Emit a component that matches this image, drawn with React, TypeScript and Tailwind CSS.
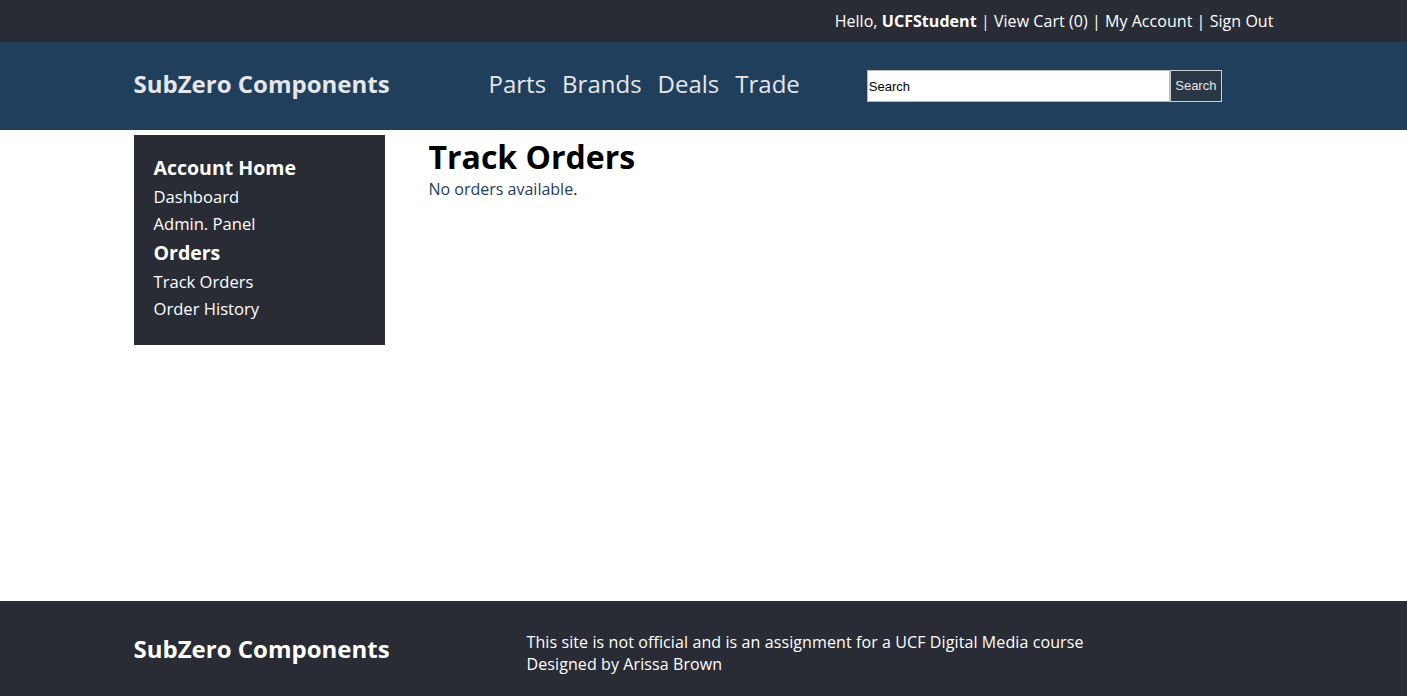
const font = { fontFamily: '"Open Sans", "Liberation Sans", sans-serif' };

function TopBar() {
  return (
    <div className="h-[42px] bg-[#292c34] text-white">
      <div className="mx-auto flex h-full w-[1140px] items-center justify-end text-[16px] tracking-[0.05px]">
        <span>
          Hello, <b>UCFStudent</b> <span className="text-[#e9e9f4]">|</span> View Cart (0){' '}
          <span>|</span> My Account <span>|</span> Sign Out
        </span>
      </div>
    </div>
  );
}

function NavBar() {
  return (
    <div className="h-[88px] bg-[#203f5d]">
      <div className="mx-auto flex h-full w-[1140px] items-center pb-[4px]">
        <div className="w-[355px] text-[24px] font-bold text-[#e6e6e6]">SubZero Components</div>
        <nav className="flex gap-[16px] text-[24px] text-[#e6e6e6]">
          <a>Parts</a>
          <a>Brands</a>
          <a>Deals</a>
          <a>Trade</a>
        </nav>
        <form className="ml-[67px] mt-[4px] flex h-[32px]" onSubmit={(e) => e.preventDefault()}>
          <input
            className="h-full w-[303px] border border-[#b8b8b8] bg-white px-[1px] text-[13px] text-black outline-none"
            style={{ fontFamily: '"Liberation Sans", Arial, sans-serif' }}
            defaultValue="Search"
          />
          <button
            className="h-full w-[52px] border border-[#d0d0d0] bg-[#2a3744] text-[13px] text-[#e6e6e6]"
            style={{ fontFamily: '"Liberation Sans", Arial, sans-serif' }}
          >
            Search
          </button>
        </form>
      </div>
    </div>
  );
}

function Sidebar() {
  return (
    <aside className="w-[251px] shrink-0 bg-[#292c34] px-[20px] pt-[18px] pb-[23px] text-white">
      <h3 className="text-[19.5px] font-bold leading-[30px]">Account Home</h3>
      <ul className="text-[16.6px] leading-[27px]">
        <li>Dashboard</li>
        <li>Admin. Panel</li>
      </ul>
      <h3 className="text-[19.5px] font-bold leading-[31px]">Orders</h3>
      <ul className="text-[16.6px] leading-[27px]">
        <li>Track Orders</li>
        <li>Order History</li>
      </ul>
    </aside>
  );
}

function Footer() {
  return (
    <footer className="h-[95px] bg-[#292c34] text-white">
      <div className="mx-auto flex h-full w-[1140px] items-center">
        <div className="w-[393px] text-[24px] font-bold">SubZero Components</div>
        <div className="pt-[8px] text-[16px] leading-[22px] tracking-[0.1px]">
          <p>This site is not official and is an assignment for a UCF Digital Media course</p>
          <p>Designed by Arissa Brown</p>
        </div>
      </div>
    </footer>
  );
}

export default function App() {
  return (
    <div className="flex min-h-[696px] flex-col bg-white" style={font}>
      <TopBar />
      <NavBar />
      <div className="mx-auto mt-[5px] flex w-[1140px] flex-1 items-start gap-[44px]">
        <Sidebar />
        <main>
          <h1 className="text-[32px] font-bold leading-[44px] text-black">Track Orders</h1>
          <p className="-mt-[2px] text-[16px] text-black">
            <a className="text-[#1f3d5c]">No orders available</a>.
          </p>
        </main>
      </div>
      <Footer />
    </div>
  );
}
